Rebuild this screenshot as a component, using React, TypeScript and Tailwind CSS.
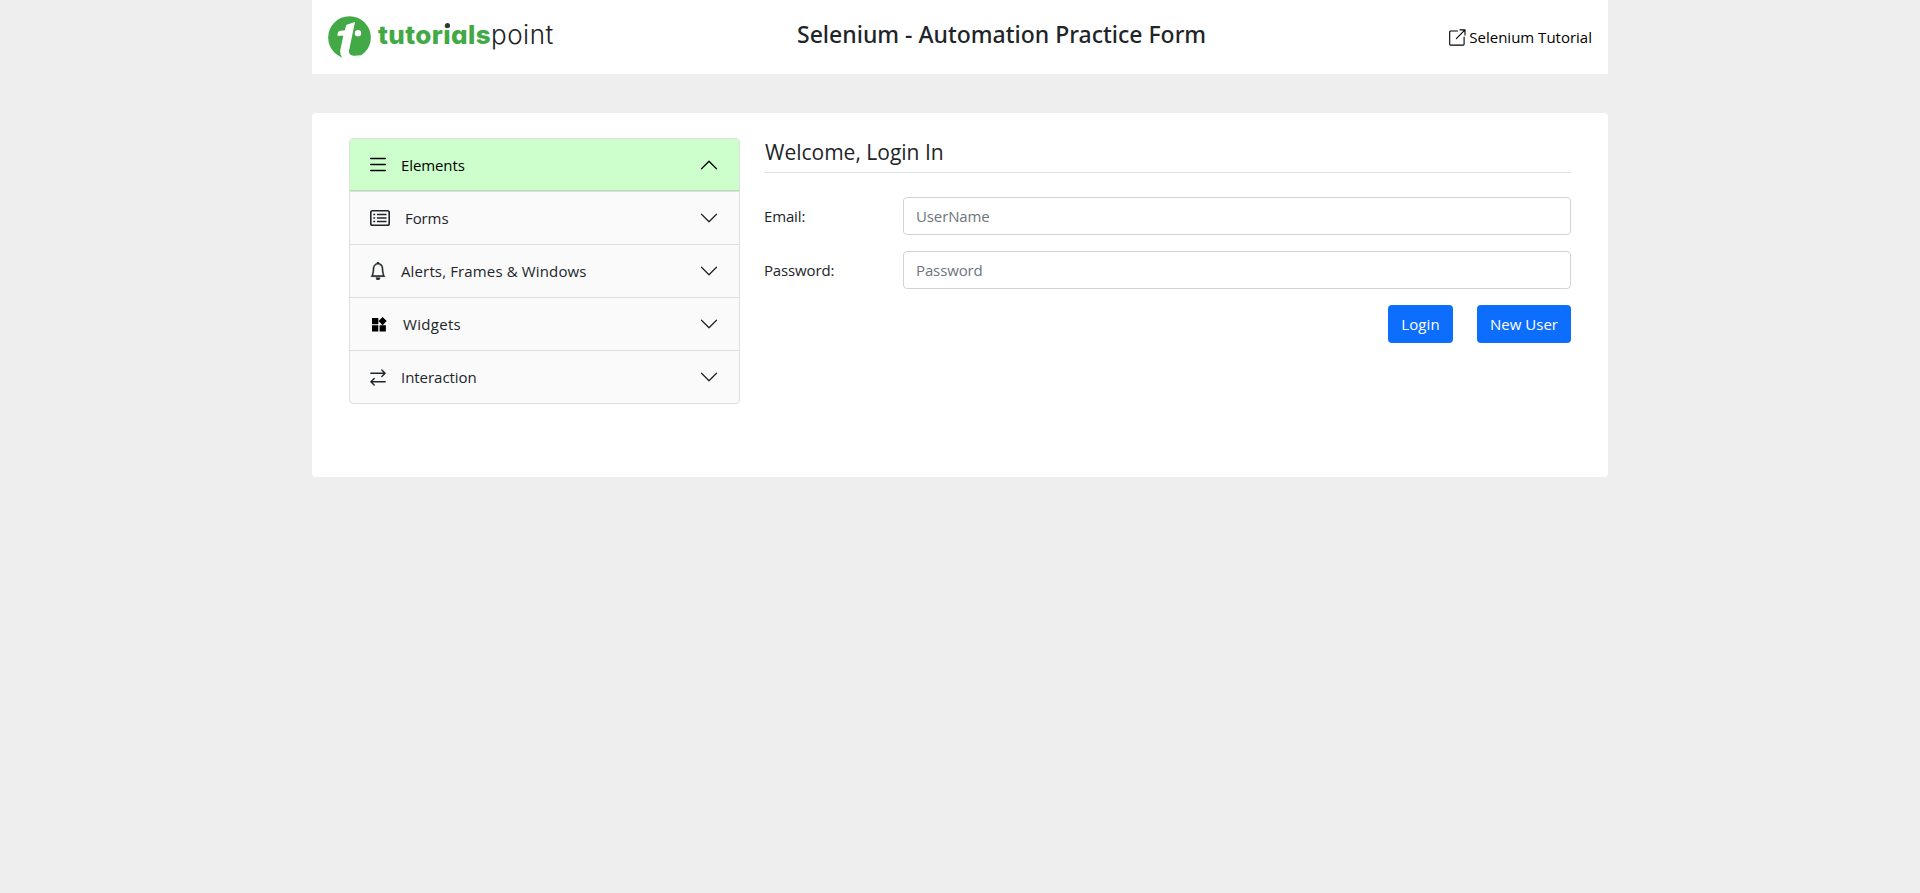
import type { ReactNode } from 'react';
import { BsBell } from 'react-icons/bs';

function Logo() {
  return (
    <a className="flex h-[42px] w-[228px] items-start" href="#">
      <svg className="h-[42px] w-[43px] shrink-0" viewBox="0 0 129 126">
        <defs>
          <clipPath id="disc">
            <circle cx="64.5" cy="64.5" r="64" />
          </clipPath>
        </defs>
        <g clipPath="url(#disc)">
          <rect width="129" height="129" fill="#42a946" />
          <path
            fill="#fff"
            d="M81 18 L56 26 Q53 29 51 43 L34 45 Q30 46 28 59 L46 59 L37 101 Q35 114 42 124 L44 130 L112 130 L112 113 Q96 120 76 119 Q62 118 63 104 Z"
          />
          <circle cx="90" cy="51.5" r="9.5" fill="#fff" />
        </g>
      </svg>
      <span className="ml-[7px] mt-0.5 flex font-['Inter',sans-serif] text-[26px] leading-[34px] [font-feature-settings:'cv11','ss03']">
        <span className="w-[113px] font-extrabold tracking-[0.4px] text-[#42a946]">
          tutor
          <span className="relative inline-block">
            i<span className="absolute left-[1.4px] top-[5px] h-[5px] w-[5px] rounded-full bg-[#333]" />
          </span>
          als
        </span>
        <span className="font-light tracking-[0.5px] text-[#222]">point</span>
      </span>
    </a>
  );
}

function MenuIcon() {
  return (
    <svg className="h-4 w-4" viewBox="0 0 16 16" stroke="#000" strokeWidth="1.5" strokeLinecap="round">
      <path d="M.7 1.5h14.6M.7 7.5h14.6M.7 13.5h14.6" />
    </svg>
  );
}

function FormIcon() {
  return (
    <svg className="h-4 w-5" viewBox="0 0 20 16" fill="none" stroke="#212529">
      <rect x=".8" y=".8" width="18.4" height="14.4" rx="1.8" strokeWidth="1.6" />
      <path d="M3.3 4.6h1.9M3.3 8h1.9M3.3 11.4h1.9M6.9 4.6h9.6M6.9 8h9.6M6.9 11.4h9.6" strokeWidth="1.5" />
    </svg>
  );
}

function WidgetIcon() {
  return (
    <svg className="ml-0.5 h-[15px] w-[15px]" viewBox="0 0 15 15" fill="#000">
      <path d="M0 1h6.3v6.3H0zM0 8.3h6.3v6.3H0zM7.6 8.3h6.3v6.3H7.6zM10.6 0l4.1 4.1-4.1 4.1-4.1-4.1z" />
    </svg>
  );
}

function SwapIcon() {
  return (
    <svg
      className="h-[17px] w-4"
      viewBox="0 0 16 17"
      fill="none"
      stroke="#212529"
      strokeWidth="1.4"
      strokeLinecap="round"
      strokeLinejoin="round"
    >
      <path d="M.8 4.2h14.3M11.8.9l3.3 3.3-3.3 3.3M15.2 12.8H.9M4.2 9.5.9 12.8l3.3 3.3" />
    </svg>
  );
}

function ExternalIcon() {
  return (
    <svg
      className="h-[17px] w-[17px]"
      viewBox="0 0 17 17"
      fill="none"
      stroke="#000"
      strokeWidth="1.1"
      strokeLinecap="round"
      strokeLinejoin="round"
    >
      <path d="M8.5 2H1.6Q.7 2 .7 2.9v12.3q0 .9.9.9h12.6q.9 0 .9-.9V8M11 .9h5v5M16 .9 7.3 9.6" />
    </svg>
  );
}

function Chevron({ open }: { open?: boolean }) {
  return (
    <svg className={open ? 'ml-auto h-5 w-5 rotate-180' : 'ml-auto h-5 w-5'} viewBox="0 0 16 16" fill={open ? '#000' : '#212529'}>
      <path
        fillRule="evenodd"
        d="M1.646 4.646a.5.5 0 0 1 .708 0L8 10.293l5.646-5.647a.5.5 0 0 1 .708.708l-6 6a.5.5 0 0 1-.708 0l-6-6a.5.5 0 0 1 0-.708z"
      />
    </svg>
  );
}

type Section = { label: string; icon: ReactNode; slot: string; text: string; open?: boolean };

const sections: Section[] = [
  { label: 'Elements', icon: <MenuIcon />, slot: 'w-[31px]', text: 'tracking-[-0.1px]', open: true },
  { label: 'Forms', icon: <FormIcon />, slot: 'w-[35px]', text: 'tracking-[-0.1px]' },
  {
    label: 'Alerts, Frames & Windows',
    icon: <BsBell className="h-[18px] w-4 stroke-[#212529] stroke-[0.5px] text-[#212529]" preserveAspectRatio="none" />,
    slot: 'w-[31px]',
    text: 'tracking-[0.14px]',
  },
  { label: 'Widgets', icon: <WidgetIcon />, slot: 'w-[33px]', text: 'tracking-[0.3px]' },
  { label: 'Interaction', icon: <SwapIcon />, slot: 'w-[31px]', text: 'tracking-[-0.04px]' },
];

function Field({ label, placeholder, type }: { label: string; placeholder: string; type: string }) {
  return (
    <div className="mb-4 flex items-center">
      <label className="w-[139px] tracking-[-0.15px]">{label}</label>
      <input
        type={type}
        placeholder={placeholder}
        className="h-[38px] flex-1 rounded border border-[#ced4da] bg-white px-3 tracking-[-0.12px] outline-none placeholder:text-[#6c757d]"
      />
    </div>
  );
}

export default function App() {
  return (
    <div className="min-h-screen bg-[#eee] font-['Open_Sans','Noto_Sans',sans-serif] text-[15px] leading-6 text-[#212529]">
      <div className="mx-auto w-[1296px]">
        <header className="flex h-[74px] items-start bg-white px-4 pt-4">
          <Logo />
          <h1 className="ml-[241px] mt-1 font-['Noto_Sans',sans-serif] text-[23px] font-medium leading-[28px]">
            Selenium - Automation Practice Form
          </h1>
          <a className="ml-auto mt-[9px] flex items-center gap-[3px] text-black" href="#">
            <ExternalIcon />
            <span>Selenium Tutorial</span>
          </a>
        </header>

        <main className="mt-[39px] flex h-[364px] rounded bg-white px-[37px] pt-[25px]">
          <nav className="h-[266px] w-[391px] overflow-hidden rounded border border-[#dfdfdf] bg-[#fafafa]">
            {sections.map((s) => (
              <button
                key={s.label}
                className={
                  s.open
                    ? 'flex h-[53px] w-full items-center border-b border-[#dfdfdf] bg-[#ccffcc] px-5 text-left text-black shadow-[inset_0_-1px_0_rgba(0,0,0,0.125)]'
                    : 'flex h-[53px] w-full items-center border-b border-[#dfdfdf] px-5 text-left last:h-[52px] last:border-b-0'
                }
              >
                <span className={`${s.slot} flex`}>{s.icon}</span>
                <span className={s.text}>{s.label}</span>
                <Chevron open={s.open} />
              </button>
            ))}
          </nav>

          <section className="ml-6 w-[807px]">
            <h2 className="mb-6 h-[35px] border-b border-[#dee2e6] pl-px text-[21px] leading-[28px]">Welcome, Login In</h2>
            <form>
              <Field label="Email:" placeholder="UserName" type="email" />
              <Field label="Password:" placeholder="Password" type="password" />
              <div className="flex justify-end gap-6 text-white">
                <button type="button" className="h-[38px] w-[65px] rounded bg-[#0d6efd] tracking-[0.1px]">
                  Login
                </button>
                <button type="button" className="h-[38px] w-[94px] rounded bg-[#0d6efd]">
                  New User
                </button>
              </div>
            </form>
          </section>
        </main>
      </div>
    </div>
  );
}
